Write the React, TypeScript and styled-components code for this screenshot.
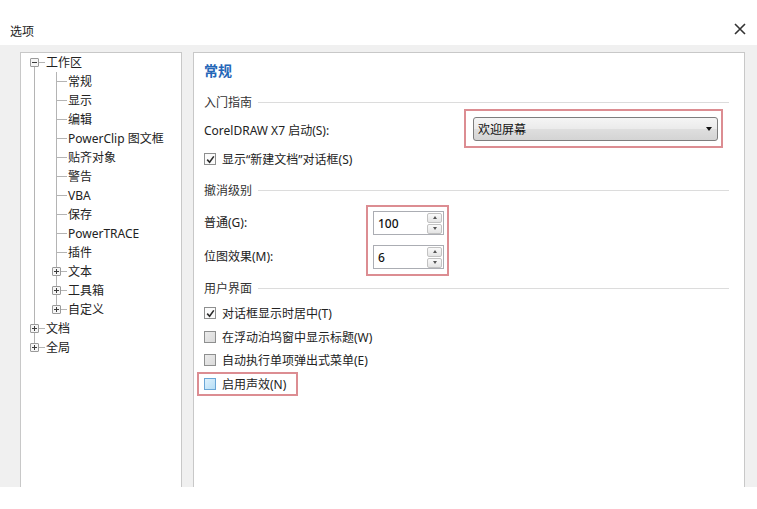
import React from 'react'
import styled, { createGlobalStyle, css } from 'styled-components'

const GlobalStyle = createGlobalStyle`
  html, body {
    margin: 0;
    padding: 0;
    background: #ffffff;
    font-family: "Noto Sans", "Noto Sans CJK SC", sans-serif;
    color: #1f1f1f;
  }
`

const Window = styled.div`
  width: 757px;
  height: 509px;
  display: flex;
  flex-direction: column;
  background: #ffffff;
`

const TitleBar = styled.div`
  height: 45px;
  display: flex;
  align-items: flex-start;
  justify-content: space-between;
  padding: 0 10px 0 10px;
  box-sizing: border-box;
`

const Title = styled.span`
  font-size: 12px;
  line-height: 16px;
  margin-top: 24px;
  color: #222;
`

const CloseButton = styled.button`
  border: 0;
  background: none;
  padding: 0;
  width: 14px;
  height: 14px;
  display: flex;
  margin-top: 22px;
`

const Body = styled.div`
  height: 442px;
  background: #f0f0f0;
  display: flex;
  gap: 11px;
  padding: 7px 12px 0 20px;
  box-sizing: border-box;
`

const Panel = styled.div<{ $width: number }>`
  width: ${(p) => p.$width}px;
  background: #ffffff;
  border: 1px solid #c8c8c8;
  border-bottom: 0;
  box-sizing: border-box;
`

const Tree = styled(Panel)`
  padding: 0 0 0 2px;
`

const TreeRow = styled.div`
  display: flex;
  height: 19px;
  align-items: center;
`

type Vertical = 'none' | 'full' | 'top' | 'bottom'

const lineColor = '#b4b4b4'

const Guide = styled.span<{ $v: Vertical; $h?: boolean }>`
  width: 22px;
  height: 19px;
  flex: none;
  display: flex;
  align-items: center;
  background-repeat: no-repeat;
  ${(p) => {
    const layers: string[] = []
    const sizes: string[] = []
    const positions: string[] = []
    if (p.$v !== 'none') {
      layers.push(`linear-gradient(${lineColor}, ${lineColor})`)
      sizes.push(p.$v === 'full' ? '1px 100%' : '1px 10px')
      positions.push(p.$v === 'bottom' ? '11px 9px' : '11px 0')
    }
    if (p.$h) {
      layers.push(`linear-gradient(${lineColor}, ${lineColor})`)
      sizes.push('10px 1px')
      positions.push('12px 9px')
    }
    return layers.length
      ? css`
          background-image: ${layers.join(', ')};
          background-size: ${sizes.join(', ')};
          background-position: ${positions.join(', ')};
        `
      : ''
  }}
`

const Expander = styled.span<{ $open: boolean }>`
  width: 9px;
  height: 9px;
  margin-left: 7px;
  margin-top: -1px;
  box-sizing: border-box;
  border: 1px solid #9a9a9a;
  border-radius: 1px;
  background-color: #f6f6f6;
  background-repeat: no-repeat;
  background-image: linear-gradient(#3c3c3c, #3c3c3c)
    ${(p) => (p.$open ? '' : ', linear-gradient(#3c3c3c, #3c3c3c)')};
  background-size: 5px 1px ${(p) => (p.$open ? '' : ', 1px 5px')};
  background-position: 1px 3px ${(p) => (p.$open ? '' : ', 3px 1px')};
`

const TreeLabel = styled.span`
  font-size: 12px;
  line-height: 19px;
  padding: 0 2px 0 1px;
  color: #222;
  white-space: nowrap;
`

const Content = styled(Panel)`
  padding: 8px 15px 0 10px;
  display: flex;
  flex-direction: column;
`

const PageTitle = styled.div`
  font-size: 14px;
  font-weight: bold;
  line-height: 20px;
  color: #2567b8;
`

const Section = styled.div<{ $top: number }>`
  display: flex;
  align-items: center;
  height: 14px;
  margin-top: ${(p) => p.$top}px;
  font-size: 12px;
  color: #333;
  &::after {
    content: '';
    flex: 1;
    height: 1px;
    margin-left: 6px;
    background: #dcdcdc;
  }
`

const FieldRow = styled.div`
  display: flex;
  align-items: center;
  height: 38px;
`

const FieldLabel = styled.span<{ $width: number }>`
  width: ${(p) => p.$width}px;
  font-size: 12px;
  padding-top: 4px;
  color: #222;
`

const Highlight = styled.div`
  border: 2px solid #dc8d92;
  box-sizing: border-box;
`

const ComboFrame = styled(Highlight)`
  width: 259px;
  height: 39px;
  padding: 6px 3px 5px 7px;
`

const Combo = styled.div`
  height: 24px;
  box-sizing: border-box;
  border: 1px solid #7d7d7d;
  border-radius: 3px;
  background: linear-gradient(#f5f5f5 0%, #ebebeb 48%, #dedede 52%, #d4d4d4 100%);
  display: flex;
  align-items: center;
  justify-content: space-between;
  padding: 0 5px 0 4px;
  font-size: 12px;
  color: #111;
`

const ComboArrow = styled.span`
  width: 0;
  height: 0;
  border-left: 3.5px solid transparent;
  border-right: 3.5px solid transparent;
  border-top: 4px solid #111;
`

const CheckRow = styled.label<{ $top: number }>`
  display: flex;
  align-items: center;
  gap: 6px;
  height: 18px;
  margin-top: ${(p) => p.$top}px;
  font-size: 12px;
  color: #222;
`

type BoxState = 'checked' | 'off' | 'hover'

const Box = styled.span<{ $state: BoxState }>`
  width: 12px;
  height: 12px;
  box-sizing: border-box;
  flex: none;
  display: flex;
  align-items: center;
  justify-content: center;
  border: 1px solid ${(p) => (p.$state === 'hover' ? '#6aa6d6' : '#8e8f8f')};
  background: ${(p) =>
    p.$state === 'checked'
      ? '#fbfbfb'
      : p.$state === 'hover'
      ? 'linear-gradient(135deg, #dff1fc, #b6def6)'
      : 'linear-gradient(135deg, #ebebeb, #dadada)'};
`

const SoundFrame = styled(Highlight)`
  align-self: flex-start;
  margin: 3px 0 0 -7px;
  padding: 1px 10px 1px 5px;
`

const SpinBlock = styled.div`
  display: flex;
  margin-top: 8px;
`

const SpinLabels = styled.div`
  width: 162px;
  display: flex;
  flex-direction: column;
  gap: 10px;
  padding-top: 6px;
`

const SpinLabel = styled.span`
  font-size: 12px;
  line-height: 24px;
  height: 24px;
  color: #222;
`

const SpinFrame = styled(Highlight)`
  width: 83px;
  height: 71px;
  padding: 4px 3px 0 5px;
  display: flex;
  flex-direction: column;
  gap: 10px;
`

const SpinInput = styled.div`
  height: 24px;
  box-sizing: border-box;
  border: 1px solid #abadb3;
  background: #fff;
  display: flex;
  align-items: center;
  justify-content: space-between;
  padding: 0 1px 0 4px;
  font-size: 12px;
  font-weight: 500;
  color: #111;
`

const SpinButtons = styled.div`
  display: flex;
  flex-direction: column;
  gap: 1px;
`

const SpinButton = styled.span<{ $up: boolean }>`
  width: 15px;
  height: 10px;
  box-sizing: border-box;
  border: 1px solid #c2c2c2;
  border-radius: 2px;
  background: linear-gradient(#fafafa, #e4e4e4);
  display: flex;
  align-items: center;
  justify-content: center;
  &::after {
    content: '';
    border-left: 2.5px solid transparent;
    border-right: 2.5px solid transparent;
    ${(p) => (p.$up ? 'border-bottom: 3px solid #555;' : 'border-top: 3px solid #555;')}
  }
`

type GuideSpec = { v: Vertical; h?: boolean; box?: '+' | '-' }
type TreeItem = { label: string; guides: GuideSpec[] }

const leaf = (label: string): TreeItem => ({
  label,
  guides: [{ v: 'full' }, { v: 'full', h: true }],
})

const treeItems: TreeItem[] = [
  { label: '工作区', guides: [{ v: 'bottom', h: true, box: '-' }] },
  leaf('常规'),
  leaf('显示'),
  leaf('编辑'),
  leaf('PowerClip 图文框'),
  leaf('贴齐对象'),
  leaf('警告'),
  leaf('VBA'),
  leaf('保存'),
  leaf('PowerTRACE'),
  leaf('插件'),
  { label: '文本', guides: [{ v: 'full' }, { v: 'full', h: true, box: '+' }] },
  { label: '工具箱', guides: [{ v: 'full' }, { v: 'full', h: true, box: '+' }] },
  { label: '自定义', guides: [{ v: 'full' }, { v: 'top', h: true, box: '+' }] },
  { label: '文档', guides: [{ v: 'full', h: true, box: '+' }] },
  { label: '全局', guides: [{ v: 'top', h: true, box: '+' }] },
]

const Check = () => (
  <svg width="9" height="9" viewBox="0 0 9 9">
    <path d="M1.2 4.6 L3.6 7.2 L7.8 1.4" fill="none" stroke="#2b2b2b" strokeWidth="1.6" />
  </svg>
)

const CheckBox = ({ state }: { state: BoxState }) => (
  <Box $state={state}>{state === 'checked' && <Check />}</Box>
)

const App = (): JSX.Element => {
  return (
    <Window>
      <GlobalStyle />
      <TitleBar>
        <Title>选项</Title>
        <CloseButton aria-label="关闭">
          <svg width="14" height="14" viewBox="0 0 14 14">
            <path d="M2 2 L12 12 M12 2 L2 12" stroke="#333" strokeWidth="1.6" />
          </svg>
        </CloseButton>
      </TitleBar>

      <Body>
        <Tree $width={162}>
          {treeItems.map((item) => (
            <TreeRow key={item.label}>
              {item.guides.map((g, i) => (
                <Guide key={i} $v={g.v} $h={g.h}>
                  {g.box && <Expander $open={g.box === '-'} />}
                </Guide>
              ))}
              <TreeLabel>{item.label}</TreeLabel>
            </TreeRow>
          ))}
        </Tree>

        <Content $width={552}>
          <PageTitle>常规</PageTitle>

          <Section $top={14}>入门指南</Section>
          <FieldRow>
            <FieldLabel $width={260}>CorelDRAW X7 启动(S):</FieldLabel>
            <ComboFrame>
              <Combo>
                <span>欢迎屏幕</span>
                <ComboArrow />
              </Combo>
            </ComboFrame>
          </FieldRow>
          <CheckRow $top={3}>
            <CheckBox state="checked" />
            显示“新建文档”对话框(S)
          </CheckRow>

          <Section $top={15}>撤消级别</Section>
          <SpinBlock>
            <SpinLabels>
              <SpinLabel>普通(G):</SpinLabel>
              <SpinLabel>位图效果(M):</SpinLabel>
            </SpinLabels>
            <SpinFrame>
              {['100', '6'].map((v) => (
                <SpinInput key={v}>
                  {v}
                  <SpinButtons>
                    <SpinButton $up />
                    <SpinButton $up={false} />
                  </SpinButtons>
                </SpinInput>
              ))}
            </SpinFrame>
          </SpinBlock>

          <Section $top={5}>用户界面</Section>
          <CheckRow $top={9}>
            <CheckBox state="checked" />
            对话框显示时居中(T)
          </CheckRow>
          <CheckRow $top={6}>
            <CheckBox state="off" />
            在浮动泊坞窗中显示标题(W)
          </CheckRow>
          <CheckRow $top={5}>
            <CheckBox state="off" />
            自动执行单项弹出式菜单(E)
          </CheckRow>
          <SoundFrame>
            <CheckRow $top={0}>
              <CheckBox state="hover" />
              启用声效(N)
            </CheckRow>
          </SoundFrame>
        </Content>
      </Body>
    </Window>
  )
}

export default App
